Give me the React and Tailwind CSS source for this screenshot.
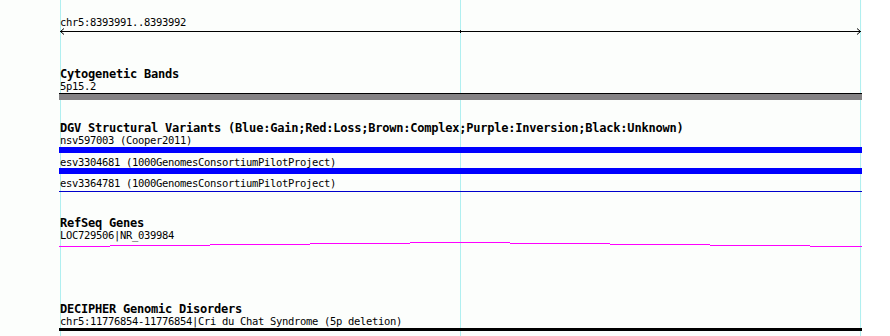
const MONO = { fontFamily: '"DejaVu Sans Mono", "Liberation Mono", monospace' };

// stepped transcript line, in px relative to the track svg (x offset 59)
const REFSEQ_STEPS = [
  [0, 51, 5],
  [51, 151, 4],
  [151, 251, 3],
  [251, 351, 2],
  [351, 451, 1],
  [451, 551, 2],
  [551, 651, 3],
  [651, 751, 4],
  [751, 803, 5],
];

function Heading({ children }) {
  return (
    <div className="h-[12px] leading-[12px] text-[12px] tracking-[-0.22px] font-bold text-black whitespace-nowrap" style={MONO}>
      {children}
    </div>
  );
}

function Label({ children, className = '' }) {
  return (
    <div className={`h-[12px] leading-[12px] text-[10.5px] tracking-[-0.32px] text-black whitespace-nowrap ${className}`} style={MONO}>
      {children}
    </div>
  );
}

function Ruler() {
  return (
    <div className="pt-[16px]">
      <div className="pl-[60px]">
        <Label>chr5:8393991..8393992</Label>
      </div>
      <svg width="862" height="7" className="block" shapeRendering="crispEdges">
        <line x1="60" y1="3.5" x2="861" y2="3.5" stroke="#000" strokeWidth="1" />
        <polyline points="64,0.5 60.5,3.5 64,6.5" fill="none" stroke="#000" strokeWidth="1" shapeRendering="auto" />
        <polyline points="857,0.5 860.5,3.5 857,6.5" fill="none" stroke="#000" strokeWidth="1" shapeRendering="auto" />
        <line x1="460.5" y1="2" x2="460.5" y2="5" stroke="#000" strokeWidth="1" />
      </svg>
    </div>
  );
}

export default function App() {
  return (
    <div className="w-[890px] h-[336px] bg-white overflow-hidden">
      <div className="relative w-[862px] h-[336px] bg-[#fcfefc]">
        {/* grid guides sit behind the tracks */}
        <div className="absolute top-0 left-[60px] w-px h-full bg-[#b0eff0]" />
        <div className="absolute top-0 left-[460px] w-px h-full bg-[#b0eff0]" />
        <div className="absolute top-0 left-[860px] w-px h-full bg-[#b0eff0]" />

        <div className="relative z-10">
          <Ruler />

          {/* Cytogenetic bands */}
          <div className="mt-[33px] pl-[60px]">
            <Heading>Cytogenetic Bands</Heading>
            <Label>5p15.2</Label>
          </div>
          <div className="mt-[1px] ml-[59px] w-[803px] h-[7px] border-t border-black bg-[#848284]" />

          {/* DGV */}
          <div className="mt-[22px] pl-[60px]">
            <Heading>DGV Structural Variants (Blue:Gain;Red:Loss;Brown:Complex;Purple:Inversion;Black:Unknown)</Heading>
            <Label>nsv597003 (Cooper2011)</Label>
          </div>
          <div className="mt-[1px] ml-[59px] w-[803px] h-[6px] bg-[#0000ff]" />
          <div className="mt-[3px] pl-[60px]">
            <Label>esv3304681 (1000GenomesConsortiumPilotProject)</Label>
          </div>
          <div className="ml-[59px] w-[803px] h-[6px] bg-[#0000ff]" />
          <div className="mt-[3px] pl-[60px]">
            <Label>esv3364781 (1000GenomesConsortiumPilotProject)</Label>
          </div>
          <div className="mt-[2px] ml-[59px] w-[803px] h-px bg-[#0000cc]" />

          {/* RefSeq */}
          <div className="mt-[25px] pl-[60px]">
            <Heading>RefSeq Genes</Heading>
            <Label>LOC729506|NR_039984</Label>
          </div>
          <svg width="862" height="7" className="block" shapeRendering="crispEdges">
            {REFSEQ_STEPS.map(([a, b, y]) => (
              <line key={a} x1={59 + a} y1={y + 0.5} x2={59 + b} y2={y + 0.5} stroke="#ff00ff" strokeWidth="1" />
            ))}
          </svg>

          {/* DECIPHER */}
          <div className="mt-[55px] pl-[60px]">
            <Heading>DECIPHER Genomic Disorders</Heading>
            <Label>chr5:11776854-11776854|Cri du Chat Syndrome (5p deletion)</Label>
          </div>
          <div className="mt-[1px] ml-[59px] w-[803px] h-[3px] bg-black" />
        </div>
      </div>
    </div>
  );
}
